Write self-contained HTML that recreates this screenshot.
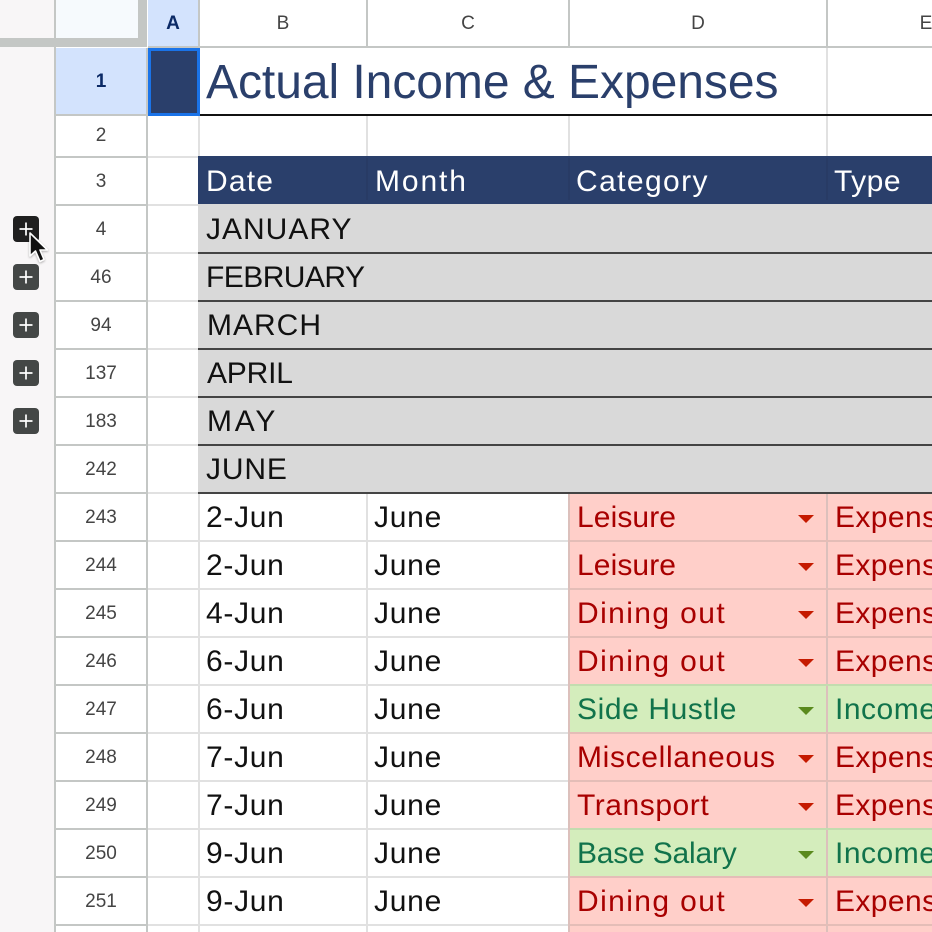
<!DOCTYPE html>
<html><head><meta charset="utf-8"><style>
html,body{margin:0;padding:0;width:932px;height:932px;overflow:hidden;background:#fff}
body{position:relative;font-family:"Liberation Sans",sans-serif}
div{position:absolute;box-sizing:border-box;white-space:nowrap}
.hl{height:2px;left:56px;width:876px;background:#e1e1e1}
.vl{width:2px;background:#e1e1e1}
.rh{left:56px;width:90px;text-align:center;color:#444;font-size:19px;height:46px;line-height:48px}
.rl{left:56px;width:92px;height:2px;background:#c4c7c5}
.ch{top:0;height:46px;line-height:47px;text-align:center;color:#444;font-size:19px}
.t{font-size:30px;line-height:50px;height:48px;color:#111}
.g{left:198px;width:734px;height:48px;background:#d9d9d9}
.gl{left:198px;width:734px;height:2px;background:#444}
.p{left:570px;width:362px;height:47px;background:#ffcfc9}
.n{left:570px;width:362px;height:47px;background:#d4edbc}
.r{color:#a80000}.gr{color:#11734b}
.d{letter-spacing:.7px}.j{letter-spacing:.75px}.le{letter-spacing:.1px}.di{letter-spacing:1.4px}
.si{letter-spacing:.6px}.mi{letter-spacing:.66px}.tr{letter-spacing:.55px}.ba{letter-spacing:-.2px}
.ex{letter-spacing:.4px}.in{letter-spacing:.5px}
.a{left:798px;width:0;height:0;border-left:8px solid transparent;border-right:8px solid transparent;border-top:8px solid #c51a00}
.a.gn{border-top-color:#5a8a1d}
.b{left:13px;width:26px;height:26px;border-radius:4px;background:#444746}
.b svg{position:absolute;left:0;top:0}
</style></head><body>
<div style="left:0;top:0;width:54px;height:932px;background:#f8f6f7"></div>
<div style="left:54px;top:0;width:2px;height:932px;background:#c4c7c5"></div>
<div style="left:56px;top:0;width:82px;height:38px;background:#f6fafd"></div>
<div style="left:0;top:38px;width:147px;height:9px;background:#c4c7c5"></div>
<div style="left:138px;top:0;width:9px;height:47px;background:#c4c7c5"></div>
<div style="left:148px;top:0;width:50px;height:46px;background:#d3e3fd"></div>
<div class="ch" style="left:148px;width:50px;color:#0b2a66;font-weight:bold;font-size:19px">A</div>
<div class="ch" style="left:200px;width:166px">B</div>
<div class="ch" style="left:368px;width:200px">C</div>
<div class="ch" style="left:570px;width:256px">D</div>
<div class="ch" style="left:828px;width:196px">E</div>
<div style="left:148px;top:46px;width:784px;height:2px;background:#c4c7c5"></div>
<div style="left:198px;top:0;width:2px;height:46px;background:#c4c7c5"></div>
<div style="left:366px;top:0;width:2px;height:46px;background:#c4c7c5"></div>
<div style="left:568px;top:0;width:2px;height:46px;background:#c4c7c5"></div>
<div style="left:826px;top:0;width:2px;height:46px;background:#c4c7c5"></div>

<div class="vl" style="left:198px;top:116px;height:40px"></div>
<div class="vl" style="left:366px;top:116px;height:40px"></div>
<div class="vl" style="left:568px;top:116px;height:40px"></div>
<div class="vl" style="left:826px;top:48px;height:108px"></div>
<div class="vl" style="left:198px;top:494px;height:438px"></div>
<div class="vl" style="left:366px;top:494px;height:438px"></div>

<div class="hl" style="left:148px;width:50px;top:156px"></div>
<div class="hl" style="left:148px;width:50px;top:204px"></div>
<div class="hl" style="left:148px;width:50px;top:252px"></div>
<div class="hl" style="left:148px;width:50px;top:300px"></div>
<div class="hl" style="left:148px;width:50px;top:348px"></div>
<div class="hl" style="left:148px;width:50px;top:396px"></div>
<div class="hl" style="left:148px;width:50px;top:444px"></div>
<div class="hl" style="left:148px;width:50px;top:492px"></div>
<div class="hl" style="top:540px;left:148px;width:422px"></div>
<div class="hl" style="top:588px;left:148px;width:422px"></div>
<div class="hl" style="top:636px;left:148px;width:422px"></div>
<div class="hl" style="top:684px;left:148px;width:422px"></div>
<div class="hl" style="top:732px;left:148px;width:422px"></div>
<div class="hl" style="top:780px;left:148px;width:422px"></div>
<div class="hl" style="top:828px;left:148px;width:422px"></div>
<div class="hl" style="top:876px;left:148px;width:422px"></div>
<div class="hl" style="top:924px;left:148px;width:422px"></div>

<div style="left:56px;top:48px;width:90px;height:66px;background:#d3e3fd"></div>
<div class="rh" style="top:58px;color:#0b2a66;font-weight:bold">1</div>
<div class="rh" style="top:112px">2</div>
<div class="rh" style="top:158px">3</div>
<div class="rh" style="top:206px">4</div>
<div class="rh" style="top:254px">46</div>
<div class="rh" style="top:302px">94</div>
<div class="rh" style="top:350px">137</div>
<div class="rh" style="top:398px">183</div>
<div class="rh" style="top:446px">242</div>
<div class="rh" style="top:494px">243</div>
<div class="rh" style="top:542px">244</div>
<div class="rh" style="top:590px">245</div>
<div class="rh" style="top:638px">246</div>
<div class="rh" style="top:686px">247</div>
<div class="rh" style="top:734px">248</div>
<div class="rh" style="top:782px">249</div>
<div class="rh" style="top:830px">250</div>
<div class="rh" style="top:878px">251</div>

<div class="rl" style="top:114px"></div>
<div class="rl" style="top:156px"></div>
<div class="rl" style="top:204px"></div>
<div class="rl" style="top:252px"></div>
<div class="rl" style="top:300px"></div>
<div class="rl" style="top:348px"></div>
<div class="rl" style="top:396px"></div>
<div class="rl" style="top:444px"></div>
<div class="rl" style="top:492px"></div>
<div class="rl" style="top:540px"></div>
<div class="rl" style="top:588px"></div>
<div class="rl" style="top:636px"></div>
<div class="rl" style="top:684px"></div>
<div class="rl" style="top:732px"></div>
<div class="rl" style="top:780px"></div>
<div class="rl" style="top:828px"></div>
<div class="rl" style="top:876px"></div>
<div class="rl" style="top:924px"></div>
<div style="left:146px;top:48px;width:2px;height:884px;background:#c4c7c5"></div>

<div style="left:200px;top:114px;width:732px;height:2px;background:#111"></div>
<div style="left:148px;top:48px;width:52px;height:68px;background:#2a3f6b;border:3px solid #1a73e8"></div>
<div style="left:206px;top:51px;height:64px;line-height:64px;font-size:48px;color:#2a3f6b;letter-spacing:-.05px">Actual Income &amp; Expenses</div>

<div style="left:198px;top:156px;width:734px;height:48px;background:#2a3f6b"></div>
<div style="left:366px;top:158px;width:2px;height:42px;background:#283b65"></div>
<div style="left:568px;top:158px;width:2px;height:42px;background:#283b65"></div>
<div style="left:826px;top:158px;width:2px;height:42px;background:#283b65"></div>
<div class="t" style="left:206px;top:157px;color:#fff;letter-spacing:1.2px">Date</div>
<div class="t" style="left:375px;top:157px;color:#fff;letter-spacing:1.9px">Month</div>
<div class="t" style="left:576px;top:157px;color:#fff;letter-spacing:1.4px">Category</div>
<div class="t" style="left:834px;top:157px;color:#fff;letter-spacing:.5px">Type</div>

<div class="g" style="top:204px"></div>
<div class="g" style="top:252px"></div>
<div class="g" style="top:300px"></div>
<div class="g" style="top:348px"></div>
<div class="g" style="top:396px"></div>
<div class="g" style="top:444px"></div>
<div class="gl" style="top:252px"></div>
<div class="gl" style="top:300px"></div>
<div class="gl" style="top:348px"></div>
<div class="gl" style="top:396px"></div>
<div class="gl" style="top:444px"></div>
<div class="gl" style="top:492px"></div>
<div class="t" style="left:206px;top:205px;letter-spacing:1px">JANUARY</div>
<div class="t" style="left:206px;top:253px;letter-spacing:-.55px">FEBRUARY</div>
<div class="t" style="left:207px;top:301px;letter-spacing:1px">MARCH</div>
<div class="t" style="left:207px;top:349px;letter-spacing:-.2px">APRIL</div>
<div class="t" style="left:207px;top:397px;letter-spacing:2.8px">MAY</div>
<div class="t" style="left:206px;top:445px;letter-spacing:.85px">JUNE</div>

<div class="p" style="top:494px"></div>
<div class="p" style="top:542px"></div>
<div class="p" style="top:590px"></div>
<div class="p" style="top:638px"></div>
<div class="n" style="top:686px"></div>
<div class="p" style="top:734px"></div>
<div class="p" style="top:782px"></div>
<div class="n" style="top:830px"></div>
<div class="p" style="top:878px"></div>
<div style="left:570px;top:924px;width:362px;height:8px;background:#ffcfc9"></div>
<div style="left:568px;top:494px;width:2px;height:438px;background:#dcc0bc"></div>
<div style="left:826px;top:494px;width:2px;height:438px;background:#dcc0bc"></div>
<div style="left:570px;top:540px;width:362px;height:2px;background:#e4bdb7"></div>
<div style="left:570px;top:588px;width:362px;height:2px;background:#e4bdb7"></div>
<div style="left:570px;top:636px;width:362px;height:2px;background:#e4bdb7"></div>
<div style="left:570px;top:684px;width:362px;height:2px;background:#c3dcaf"></div>
<div style="left:570px;top:732px;width:362px;height:2px;background:#e4bdb7"></div>
<div style="left:570px;top:780px;width:362px;height:2px;background:#e4bdb7"></div>
<div style="left:570px;top:828px;width:362px;height:2px;background:#c3dcaf"></div>
<div style="left:570px;top:876px;width:362px;height:2px;background:#e4bdb7"></div>
<div style="left:570px;top:924px;width:362px;height:2px;background:#e4bdb7"></div>

<div class="t d" style="left:206px;top:493px">2-Jun</div><div class="t j" style="left:374px;top:493px">June</div><div class="t r le" style="left:577px;top:493px">Leisure</div><div class="a" style="top:515px"></div><div class="t r ex" style="left:835px;top:493px">Expense</div>
<div class="t d" style="left:206px;top:541px">2-Jun</div><div class="t j" style="left:374px;top:541px">June</div><div class="t r le" style="left:577px;top:541px">Leisure</div><div class="a" style="top:563px"></div><div class="t r ex" style="left:835px;top:541px">Expense</div>
<div class="t d" style="left:206px;top:589px">4-Jun</div><div class="t j" style="left:374px;top:589px">June</div><div class="t r di" style="left:577px;top:589px">Dining out</div><div class="a" style="top:611px"></div><div class="t r ex" style="left:835px;top:589px">Expense</div>
<div class="t d" style="left:206px;top:637px">6-Jun</div><div class="t j" style="left:374px;top:637px">June</div><div class="t r di" style="left:577px;top:637px">Dining out</div><div class="a" style="top:659px"></div><div class="t r ex" style="left:835px;top:637px">Expense</div>
<div class="t d" style="left:206px;top:685px">6-Jun</div><div class="t j" style="left:374px;top:685px">June</div><div class="t gr si" style="left:577px;top:685px">Side Hustle</div><div class="a gn" style="top:707px"></div><div class="t gr in" style="left:835px;top:685px">Income</div>
<div class="t d" style="left:206px;top:733px">7-Jun</div><div class="t j" style="left:374px;top:733px">June</div><div class="t r mi" style="left:577px;top:733px">Miscellaneous</div><div class="a" style="top:755px"></div><div class="t r ex" style="left:835px;top:733px">Expense</div>
<div class="t d" style="left:206px;top:781px">7-Jun</div><div class="t j" style="left:374px;top:781px">June</div><div class="t r tr" style="left:577px;top:781px">Transport</div><div class="a" style="top:803px"></div><div class="t r ex" style="left:835px;top:781px">Expense</div>
<div class="t d" style="left:206px;top:829px">9-Jun</div><div class="t j" style="left:374px;top:829px">June</div><div class="t gr ba" style="left:577px;top:829px">Base Salary</div><div class="a gn" style="top:851px"></div><div class="t gr in" style="left:835px;top:829px">Income</div>
<div class="t d" style="left:206px;top:877px">9-Jun</div><div class="t j" style="left:374px;top:877px">June</div><div class="t r di" style="left:577px;top:877px">Dining out</div><div class="a" style="top:899px"></div><div class="t r ex" style="left:835px;top:877px">Expense</div>

<div class="b" style="top:216px;background:#1f1f1f"><svg width="26" height="26"><path d="M13 6.5V19.5M6.5 13H19.5" stroke="#fff" stroke-width="1.7" fill="none"/></svg></div>
<div class="b" style="top:264px"><svg width="26" height="26"><path d="M13 6.5V19.5M6.5 13H19.5" stroke="#fff" stroke-width="1.7" fill="none"/></svg></div>
<div class="b" style="top:312px"><svg width="26" height="26"><path d="M13 6.5V19.5M6.5 13H19.5" stroke="#fff" stroke-width="1.7" fill="none"/></svg></div>
<div class="b" style="top:360px"><svg width="26" height="26"><path d="M13 6.5V19.5M6.5 13H19.5" stroke="#fff" stroke-width="1.7" fill="none"/></svg></div>
<div class="b" style="top:408px"><svg width="26" height="26"><path d="M13 6.5V19.5M6.5 13H19.5" stroke="#fff" stroke-width="1.7" fill="none"/></svg></div>
<svg style="position:absolute;left:26px;top:228px;filter:drop-shadow(0 1px 1px rgba(0,0,0,.3))" width="28" height="40"><path d="M4 5V28L9.5 23L14 33.5L18 31.5L14 22H21.5Z" fill="#111" stroke="#fff" stroke-width="1.6" stroke-linejoin="round"/></svg>
</body></html>
